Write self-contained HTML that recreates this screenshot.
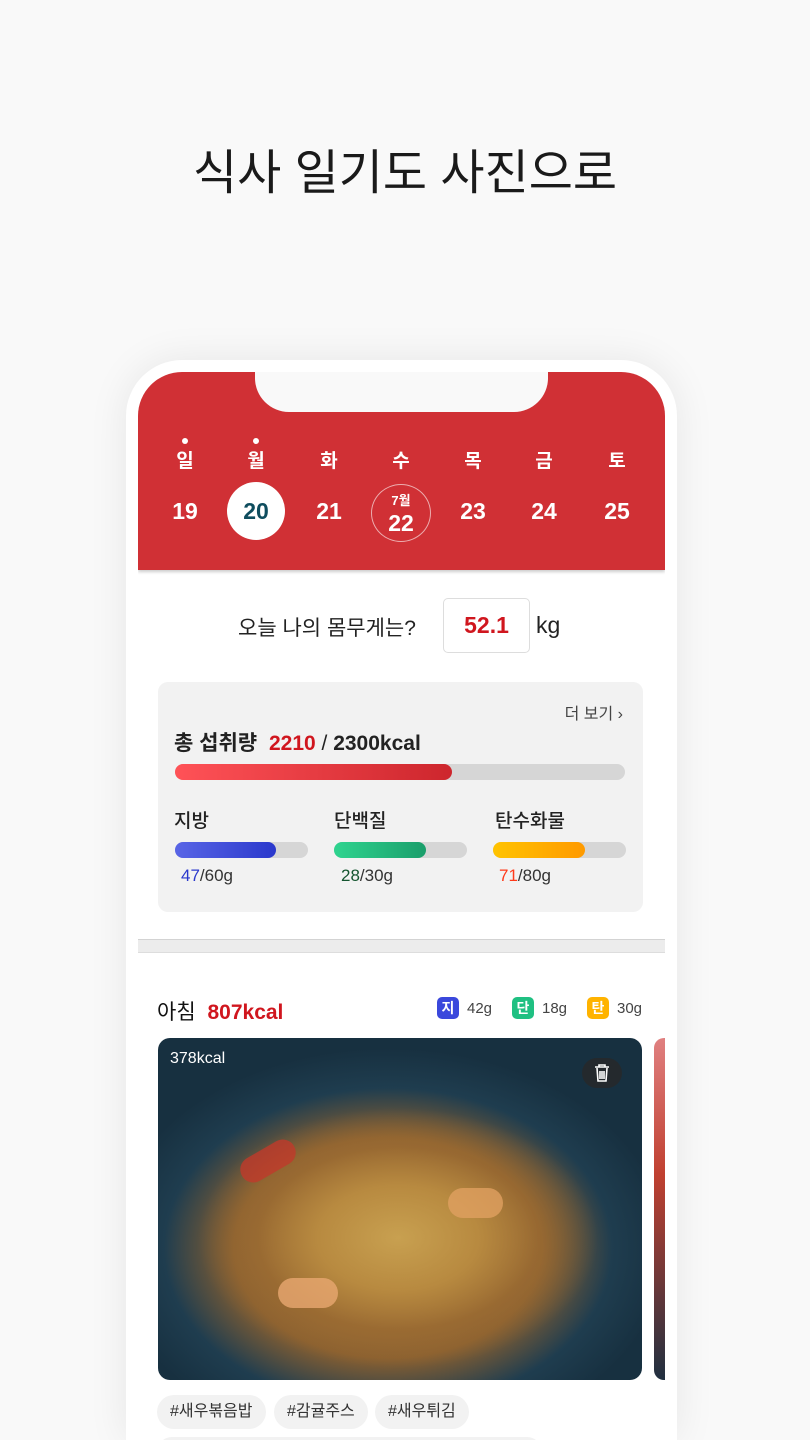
<!DOCTYPE html>
<html><head><meta charset="utf-8">
<style>
*{margin:0;padding:0;box-sizing:border-box}
html,body{width:810px;height:1440px;overflow:hidden}
body{background:#f9f9f9;font-family:"Liberation Sans","Noto Sans CJK KR",sans-serif;position:relative;color:#222}
.title{position:absolute;top:133px;left:0;width:810px;text-align:center;font-size:48px;font-weight:400;color:#1a1a1a}
.phone{position:absolute;left:126px;top:360px;width:551px;height:1080px;background:#fff;border-radius:56px 56px 0 0;box-shadow:0 0 40px rgba(0,0,0,0.08)}
.screen{position:absolute;left:138px;top:372px;width:527px;height:1068px;background:#fff;border-radius:44px 44px 0 0;overflow:hidden}
.red{position:absolute;left:0;top:0;width:527px;height:198px;background:#d03035;box-shadow:0 2px 3px rgba(0,0,0,.2)}
.notch{position:absolute;left:117px;top:-2px;width:293px;height:42px;background:#f9f9f9;border-radius:0 0 34px 34px}
.day{position:absolute;top:74px;width:60px;margin-left:-30px;text-align:center;color:#fff;font-size:19px;font-weight:bold}
.dot{position:absolute;top:66px;width:6px;height:6px;margin-left:-3px;border-radius:3px;background:#fff}
.num{position:absolute;top:126px;width:60px;margin-left:-30px;text-align:center;color:#fff;font-size:23px;font-weight:bold}
.sel{position:absolute;left:89px;top:110px;width:58px;height:58px;border-radius:50%;background:#fff}
.today{position:absolute;left:233px;top:112px;width:60px;height:58px;border-radius:50%;border:1.5px solid rgba(255,255,255,.6)}
.abs{position:absolute}
.card{position:absolute;left:20px;top:310px;width:485px;height:230px;background:#f2f2f2;border-radius:10px}
.bar{position:absolute;height:16px;border-radius:8px;background:#d6d6d6}
.fill{position:absolute;left:0;top:0;height:16px;border-radius:8px}
.lbl{position:absolute;font-size:19px;font-weight:500;color:#222}
.val{position:absolute;font-size:17px;color:#333}
.badge{position:absolute;top:625px;width:22px;height:22px;border-radius:5px;color:#fff;font-size:14px;font-weight:bold;text-align:center;line-height:22px}
.bv{position:absolute;top:628px;font-size:15px;color:#444}
.tag{position:absolute;top:1023px;height:34px;border-radius:17px;background:#f2f2f2;font-size:16px;color:#333;line-height:34px;padding:0 13px}
</style></head><body>
<div class="title">식사 일기도 사진으로</div>
<div class="phone"></div>
<div class="screen">
 <div class="red">
  <div class="notch"></div>
  <div class="dot" style="left:47px"></div><div class="dot" style="left:118px"></div>
  <div class="day" style="left:47px">일</div>
  <div class="day" style="left:118px">월</div>
  <div class="day" style="left:191px">화</div>
  <div class="day" style="left:263px">수</div>
  <div class="day" style="left:335px">목</div>
  <div class="day" style="left:406px">금</div>
  <div class="day" style="left:479px">토</div>
  <div class="sel"></div>
  <div class="today"></div>
  <div class="num" style="left:47px">19</div>
  <div class="num" style="left:118px;color:#0f4d5e">20</div>
  <div class="num" style="left:191px">21</div>
  <div class="abs" style="left:233px;top:118px;width:60px;text-align:center;color:#fff;font-size:13px;font-weight:bold">7월</div>
  <div class="num" style="left:263px;top:138px">22</div>
  <div class="num" style="left:335px">23</div>
  <div class="num" style="left:406px">24</div>
  <div class="num" style="left:479px">25</div>
 </div>
 <div class="abs" style="left:100px;top:240px;font-size:21px;color:#222">오늘 나의 몸무게는?</div>
 <div class="abs" style="left:305px;top:226px;width:87px;height:55px;border:1px solid #ddd;border-radius:5px;text-align:center;line-height:53px;color:#d0161e;font-size:23px;font-weight:bold">52.1</div>
 <div class="abs" style="left:398px;top:240px;font-size:23px;color:#222">kg</div>
 <div class="card">
  <div class="abs" style="right:20px;top:18px;font-size:16px;color:#444">더 보기 ›</div>
  <div class="abs" style="left:16px;top:45px;font-size:21px;font-weight:bold"><span style="color:#222">총 섭취량</span> <span style="color:#d0161e;margin-left:6px">2210</span><span style="font-weight:normal"> / </span>2300kcal</div>
  <div class="bar" style="left:17px;top:82px;width:450px"><div class="fill" style="width:277px;background:linear-gradient(90deg,#ff5257,#cd262d)"></div></div>
  <div class="lbl" style="left:16px;top:124px">지방</div>
  <div class="lbl" style="left:176px;top:124px">단백질</div>
  <div class="lbl" style="left:337px;top:124px">탄수화물</div>
  <div class="bar" style="left:17px;top:160px;width:133px"><div class="fill" style="width:101px;background:linear-gradient(90deg,#5965e6,#2a38cc)"></div></div>
  <div class="bar" style="left:176px;top:160px;width:133px"><div class="fill" style="width:92px;background:linear-gradient(90deg,#2fd48f,#1a9e6b)"></div></div>
  <div class="bar" style="left:335px;top:160px;width:133px"><div class="fill" style="width:92px;background:linear-gradient(90deg,#ffc300,#ff9a00)"></div></div>
  <div class="val" style="left:23px;top:184px"><span style="color:#2a38cc">47</span>/60g</div>
  <div class="val" style="left:183px;top:184px"><span style="color:#14552f">28</span>/30g</div>
  <div class="val" style="left:341px;top:184px"><span style="color:#ff3a1a">71</span>/80g</div>
 </div>
 <div class="abs" style="left:0;top:567px;width:527px;height:14px;background:#ececec;border-top:1px solid #d3d3d3;border-bottom:1px solid #ddd"></div>
 <div class="abs" style="left:19px;top:624px;font-size:21px;color:#111">아침 <span style="color:#d0161e;font-weight:bold;margin-left:6px">807kcal</span></div>
 <div class="badge" style="left:299px;background:#3a48dc">지</div><div class="bv" style="left:329px">42g</div>
 <div class="badge" style="left:374px;background:#1fc082">단</div><div class="bv" style="left:404px">18g</div>
 <div class="badge" style="left:449px;background:#ffb300">탄</div><div class="bv" style="left:479px">30g</div>
 <div class="abs" style="left:20px;top:666px;width:484px;height:342px;border-radius:12px;overflow:hidden;background:
  radial-gradient(ellipse 200px 130px at 240px 200px,#c8a050 0%,#b88a40 40%,rgba(160,110,50,0.6) 70%,rgba(0,0,0,0) 100%),
  radial-gradient(ellipse 280px 200px at 230px 210px,#a87a3c 0%,#8a6030 55%,#1f3d4f 80%,#173040 100%),
  linear-gradient(180deg,#5a5a60,#203040)">
  <div class="abs" style="left:80px;top:110px;width:60px;height:26px;border-radius:13px;background:#c0392b;transform:rotate(-30deg);opacity:.8"></div>
  <div class="abs" style="left:290px;top:150px;width:55px;height:30px;border-radius:15px;background:#e0a060;opacity:.8"></div>
  <div class="abs" style="left:120px;top:240px;width:60px;height:30px;border-radius:15px;background:#e8a870;opacity:.8"></div>
  <div class="abs" style="left:12px;top:12px;color:#fff;font-size:16px">378kcal</div>
  <div class="abs" style="left:424px;top:20px;width:40px;height:30px;border-radius:15px;background:rgba(40,40,40,.8)">
   <svg width="40" height="30" viewBox="0 0 40 30"><g fill="none" stroke="#fff" stroke-width="1.6"><path d="M13 9h14M17 9V7h6v2M15 10l1 13h8l1-13M18 13v8M20 13v8M22 13v8"/></g></svg>
  </div>
 </div>
 <div class="abs" style="left:516px;top:666px;width:20px;height:342px;border-radius:12px;background:linear-gradient(180deg,#e08080,#c04030 40%,#203040)"></div>
 <div class="tag" style="left:19px">#새우볶음밥</div>
 <div class="tag" style="left:136px">#감귤주스</div>
 <div class="tag" style="left:237px">#새우튀김</div>
 <div class="abs" style="left:19px;top:1065px;width:385px;height:30px;border-radius:15px;background:#f2f2f2"></div>
</div>
</body></html>
